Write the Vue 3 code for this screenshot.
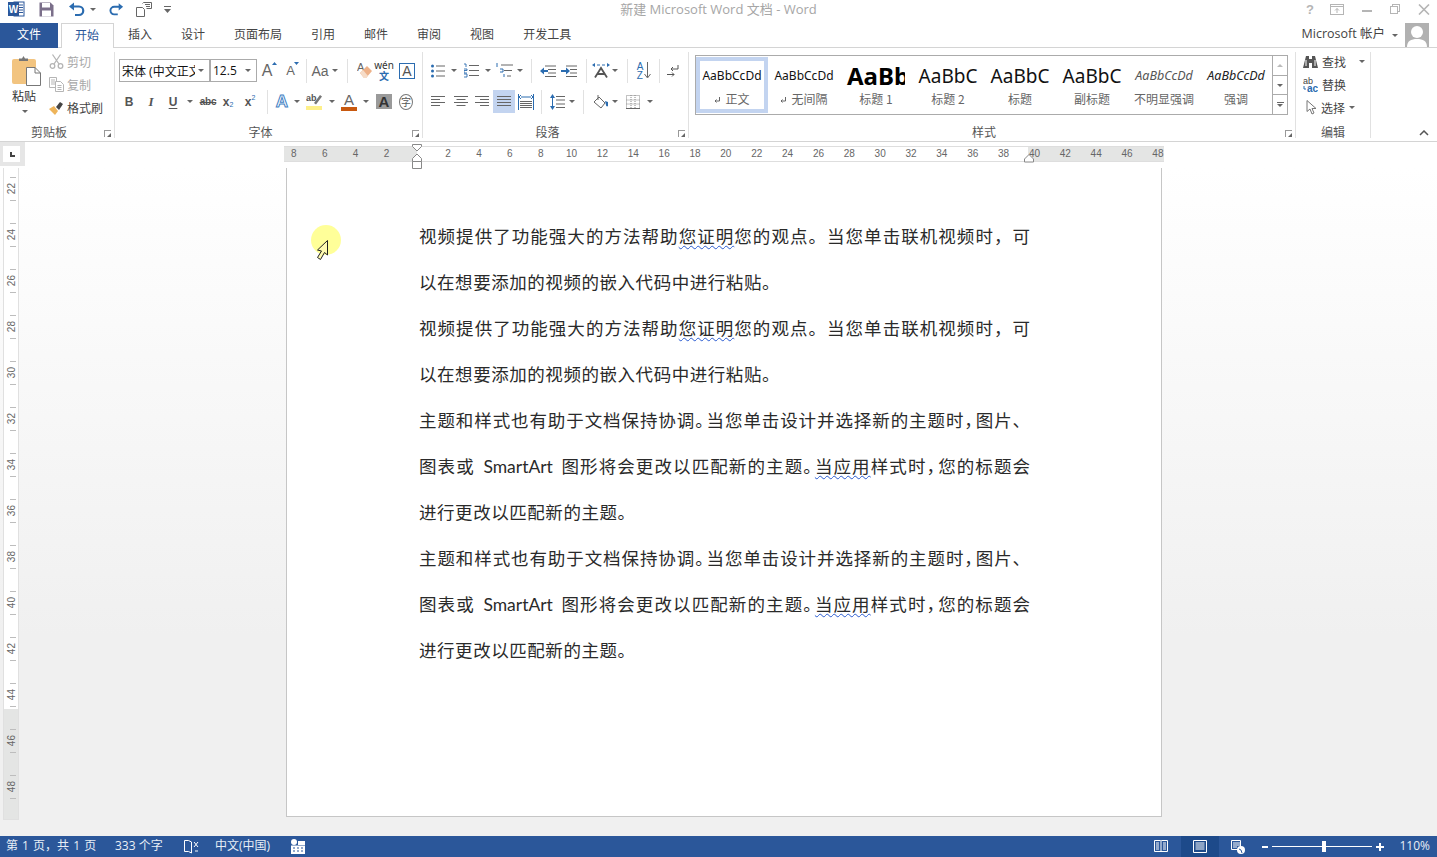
<template>
  <div class="word">
    <!-- title bar -->
    <header class="titlebar">
      <div class="qat">
        <svg class="qi" width="17" height="16" viewBox="0 0 17 16"><rect x="6" y="1" width="10" height="14" fill="#fff" stroke="#2b579a"/><path d="M10 4h5M10 6.500h5M10 9h5M10 11.500h5" stroke="#2b579a"/><rect x="0" y="1" width="11" height="14" fill="#2b579a"/><text x="5.500" y="12" class="logo-w">W</text></svg>
        <svg class="qi save" width="15" height="15" viewBox="0 0 15 15"><path d="M.5.500h11l3 3v11H.5z" fill="#7b6f8a"/><rect x="3" y="1" width="8" height="4.500" fill="#fff"/><rect x="3" y="8.500" width="9" height="6" fill="#fff"/></svg>
        <svg class="qi undo" width="18" height="15" viewBox="0 0 18 15"><path d="M5 4.500h6a4.200 4.200 0 0 1 0 8.500H7" fill="none" stroke="#2b6cb0" stroke-width="2.200"/><path d="M1 4.500 6 .5v8z" fill="#2b6cb0"/></svg>
        <i class="caret qc"></i>
        <svg class="qi redo" width="16" height="15" viewBox="0 0 18 15"><path d="M13 4.500H7a4.200 4.200 0 0 0 0 8.500h4" fill="none" stroke="#2b6cb0" stroke-width="2.200"/><path d="M17 4.500 12 .5v8z" fill="#2b6cb0"/></svg>
        <svg class="qi touch" width="17" height="16" viewBox="0 0 17 16" fill="none" stroke="#666"><path d="M.5 6.500h6l2 2v7h-8z" fill="#fff"/><path d="M6.500 2.500l1-1h8v6h-5"/><path d="M9 3.500h5M10 5.500h4"/></svg>
        <svg class="qi custom" width="7" height="8" viewBox="0 0 7 8"><path d="M0 1.500h7" stroke="#666"/><path d="M0 4h7L3.500 8z" fill="#666"/></svg>
      </div>
      <div class="doc-title">新建 Microsoft Word 文档 - Word</div>
      <div class="winbtns">
        <span class="help">?</span>
        <svg width="14" height="11" viewBox="0 0 14 11" fill="none" stroke="#b5b5b5"><rect x=".5" y=".5" width="13" height="10"/><path d="M.5 2.500h13M7 9V4.500M5 6.500l2-2 2 2"/></svg>
        <svg width="10" height="10" viewBox="0 0 10 10"><path d="M0 7h10" stroke="#b5b5b5" stroke-width="2"/></svg>
        <svg width="10" height="10" viewBox="0 0 10 10" fill="#fff" stroke="#b5b5b5"><rect x="2.500" y=".5" width="7" height="7"/><rect x=".5" y="2.500" width="7" height="7"/></svg>
        <svg width="12" height="11" viewBox="0 0 12 11"><path d="M1 .5l10 10M11 .5l-10 10" stroke="#b5b5b5" stroke-width="1.600"/></svg>
      </div>
    </header>

    <!-- tabs -->
    <nav class="tabs">
      <div class="tab-file">文件</div>
      <div class="tab active">开始</div>
      <div v-for="tab in tabs" :key="tab" class="tab">{{ tab }}</div>
      <div class="account">
        <span class="acc-name">Microsoft 帐户</span>
        <i class="caret"></i>
        <svg class="avatar" width="24" height="24" viewBox="0 0 24 24"><rect width="24" height="24" fill="#b1b1b1"/><circle cx="12" cy="9" r="6" fill="#fff"/><path d="M2 24c0-6 4-8 10-8s10 2 10 8z" fill="#fff"/></svg>
      </div>
    </nav>

    <!-- ribbon -->
    <section class="ribbon">
      <div class="group g-clip">
        <div class="clip-body">
          <div class="paste">
            <svg width="29" height="30" viewBox="0 0 29 30"><rect x="0" y="3" width="24" height="25" rx="2" fill="#f2c480"/><path d="M7 5V2.500h3L11.500 0l1.500 2.500h3V5z" fill="#767676"/><path d="M14.500 11.500h8.500l5.500 5.500v12.500h-14z" fill="#fff" stroke="#777"/><path d="M23 11.500V17h5.500" fill="none" stroke="#777"/></svg>
            <span class="paste-text">粘贴</span>
            <i class="caret"></i>
          </div>
          <div class="clip-col">
            <div class="clip-row off">
              <svg width="15" height="15" viewBox="0 0 15 15" fill="none" stroke="#b5b5b5" stroke-width="1.300"><circle cx="3.500" cy="12" r="2.300"/><circle cx="11.500" cy="12" r="2.300"/><path d="M5 10 11.500.5M10 10 3.500.5"/></svg>
              <span>剪切</span>
            </div>
            <div class="clip-row off">
              <svg width="15" height="15" viewBox="0 0 15 15" fill="#fff" stroke="#b5b5b5"><path d="M.5.500h7v10h-7z"/><path d="M2 3h4M2 5h4M2 7h4"/><path d="M6.500 4.500h5l3 3v7h-8z"/><path d="M8.500 8.500h4M8.500 10.500h4M8.500 12.500h4"/></svg>
              <span>复制</span>
            </div>
            <div class="clip-row">
              <svg width="15" height="14" viewBox="0 0 15 14"><path d="M0 8l5-3 4 5-3 4z" fill="#eeb45a"/><path d="M7 6l4-5 3 2-4 6z" fill="#444"/></svg>
              <span>格式刷</span>
            </div>
          </div>
        </div>
        <div class="g-label">剪贴板</div>
        <i class="launcher"></i>
      </div>

      <div class="group g-font">
        <div class="row row-first">
          <div class="select w91"><span class="sel-text">宋体 (中文正文)</span><i class="caret"></i></div>
          <div class="select w47 no-left"><span class="sel-text">12.5</span><i class="caret"></i></div>
          <div class="t w24"><span class="big-a">A</span><svg class="up-tri" width="5" height="3" viewBox="0 0 5 3"><path d="M0 3 2.500 0 5 3z" fill="#2b6cb0"/></svg></div>
          <div class="t w22"><span class="small-a">A</span><svg class="up-tri" width="5" height="3" viewBox="0 0 5 3"><path d="M0 0h5L2.500 3z" fill="#2b6cb0"/></svg></div>
          <i class="sep w5"></i>
          <div class="t w24"><span class="aa">Aa</span></div>
          <i class="caret"></i>
          <i class="sep w18"></i>
          <div class="t w18">
            <svg width="16" height="17" viewBox="0 0 16 17"><text x="0" y="9" class="eraser-a">A</text><path d="M3 11 10 4l5 5-6 7H7z" fill="#eeb188"/><path d="M3 11l4 5h2l2-2-5-6z" fill="#f6dcc8"/></svg>
          </div>
          <div class="t w20 wen"><span class="wen-top">wén</span><span class="wen-bot">文</span></div>
          <div class="t w26"><span class="a-box">A</span></div>
        </div>
        <div class="row row2">
          <div class="t w22 fmt b">B</div>
          <div class="t w22 fmt it">I</div>
          <div class="t w22 fmt u">U</div>
          <i class="caret c12"></i>
          <div class="t w24 fmt abc">abc</div>
          <div class="t w16 fmt sub">x<small>2</small></div>
          <div class="t w28 fmt sup">x<small>2</small></div>
          <i class="sep w6"></i>
          <div class="t w24"><span class="a-glow">A</span></div>
          <i class="caret"></i>
          <div class="t w29">
            <svg width="17" height="17" viewBox="0 0 17 17"><text x="0" y="8" class="ab-t">ab</text><path d="M8 10l6-8 2 1.500-6 8z" fill="#777"/><rect x="0" y="13" width="16" height="4" fill="#fef08a"/></svg>
          </div>
          <i class="caret"></i>
          <div class="t w28 col-a"><span>A</span><i class="bar"></i></div>
          <i class="caret"></i>
          <div class="t w30"><span class="a-gray">A</span></div>
          <div class="t w14"><span class="zi">字</span></div>
        </div>
        <div class="g-label">字体</div>
        <i class="launcher"></i>
      </div>

      <div class="group g-para">
        <div class="row">
          <div class="t w26"><svg width="14" height="14" viewBox="0 0 14 14"><path d="M5 2h9M5 7h9M5 12h9" stroke="#666"/><circle cx="1.500" cy="2" r="1.500" fill="#2b6cb0"/><circle cx="1.500" cy="7" r="1.500" fill="#2b6cb0"/><circle cx="1.500" cy="12" r="1.500" fill="#2b6cb0"/></svg></div>
          <i class="caret"></i>
          <div class="t w28"><svg width="15" height="15" viewBox="0 0 15 15"><path d="M5 2.500h10M5 7.500h10M5 12.500h10" stroke="#666"/><path d="M0 1h2v3M0 6h3v1.500H0V10h3M0 11h3v3H0" fill="none" stroke="#2b6cb0" stroke-width=".9"/></svg></div>
          <i class="caret"></i>
          <div class="t w26"><svg width="17" height="15" viewBox="0 0 17 15"><path d="M5 2h12M8 7.500h8M11 13h4" stroke="#666"/><path d="M1 0v4M4 6h3v3H4M8 11v3" fill="none" stroke="#2b6cb0"/></svg></div>
          <i class="caret"></i>
          <i class="sep w16"></i>
          <div class="t w18"><svg width="16" height="12" viewBox="0 0 16 12"><path d="M5 1h11M8 4.500h8M8 8h8M5 11.500h11" stroke="#666"/><path d="M0 6l4-3.500V5h4v2H4v2.500z" fill="#2b6cb0"/></svg></div>
          <div class="t w24"><svg width="16" height="12" viewBox="0 0 16 12"><path d="M5 1h11M9 4.500h7M9 8h7M5 11.500h11" stroke="#666"/><path d="M9 6 5 2.500V5H0v2h5v2.500z" fill="#2b6cb0"/></svg></div>
          <i class="sep w10"></i>
          <div class="t w20"><svg width="18" height="15" viewBox="0 0 18 15"><path d="M3 14.500 9 5l6 9.500M5 11h8" fill="none" stroke="#555" stroke-width="1.800"/><path d="M5 2h3M10 2h3" stroke="#2b6cb0"/><path d="M0 2l3-2v4zM18 2l-3-2v4z" fill="#2b6cb0"/></svg></div>
          <i class="caret c8"></i>
          <i class="sep w16"></i>
          <div class="t w18 sort"><span class="az">A<br />Z</span><svg width="7" height="17" viewBox="0 0 7 17"><path d="M3.500 0v15M.5 12l3 4 3-4" fill="none" stroke="#666"/></svg></div>
          <i class="sep w12"></i>
          <div class="t w16"><svg width="12" height="14" viewBox="0 0 12 14" fill="none" stroke="#555"><path d="M11 1v4H4"/><path d="M6 3 4 5l2 2"/><path d="M0 10.500h7M5 8.500l2 2-2 2"/></svg></div>
        </div>
        <div class="row row2">
          <div class="t w26"><svg width="14" height="11" viewBox="0 0 14 11"><path d="M0 .5h14M0 3.500h9M0 6.500h14M0 9.500h9" stroke="#666"/></svg></div>
          <div class="t w20"><svg width="14" height="11" viewBox="0 0 14 11"><path d="M0 .5h14M2.500 3.500h9M0 6.500h14M2.500 9.500h9" stroke="#666"/></svg></div>
          <div class="t w22"><svg width="14" height="11" viewBox="0 0 14 11"><path d="M0 .5h14M5 3.500h9M0 6.500h14M5 9.500h9" stroke="#666"/></svg></div>
          <div class="t w22 on"><svg width="14" height="11" viewBox="0 0 14 11"><path d="M0 .5h14M0 3.500h14M0 6.500h14M0 9.500h14" stroke="#666"/></svg></div>
          <div class="t w22"><svg width="16" height="16" viewBox="0 0 16 16"><path d="M.5 0v16M15.500 0v16" stroke="#2b6cb0"/><path d="M3 3h10M3 1l-2 2 2 2M13 1l2 2-2 2" fill="none" stroke="#2b6cb0"/><path d="M2 7.500h12M2 9.500h12M2 11.500h12M2 13.500h12" stroke="#666"/></svg></div>
          <i class="sep w8"></i>
          <div class="t w24"><svg width="15" height="16" viewBox="0 0 15 16"><path d="M6 2.500h9M6 6h9M6 10h9M6 13.500h9" stroke="#666"/><path d="M2.500 2v12" stroke="#2b6cb0"/><path d="M0 4l2.500-4L5 4zM0 12l2.500 4L5 12z" fill="#2b6cb0"/></svg></div>
          <i class="caret"></i>
          <i class="sep w16"></i>
          <div class="t w20"><svg width="16" height="16" viewBox="0 0 16 16"><path d="M1 8 6 3l6 6-4 5z" fill="#fff" stroke="#666"/><path d="M5 1v5" stroke="#666"/><path d="M12 7l3 1v4c-1 1-2 0-2-1z" fill="#2b6cb0"/></svg></div>
          <i class="caret c8"></i>
          <div class="t w28"><svg width="14" height="14" viewBox="0 0 14 14"><path d="M.5.500h13v13H.5zM.5 5h13M.5 9h13M5 0v14M9 0v14" fill="none" stroke="#888" stroke-dasharray="1 1"/><path d="M0 13.500h14" stroke="#666"/></svg></div>
          <i class="caret"></i>
        </div>
        <div class="g-label">段落</div>
        <i class="launcher"></i>
      </div>

      <div class="group g-styles">
        <div class="gallery">
          <div
              v-for="(item, idx) in styles"
              :key="item.label"
              class="style-item"
              :class="[item.cls, { selected: idx === 0 }]"
          >
            <div class="sample">{{ item.sample }}</div>
            <div class="style-label">
              <svg v-if="item.mark" class="para-mark" width="6" height="7" viewBox="0 0 6 7" fill="none" stroke="#666"><path d="M5.500 0v4H1M2.500 2.500 1 4l1.500 1.500"/></svg>{{ item.label }}
            </div>
          </div>
          <div class="gal-scroll">
            <div class="gal-btn"><i class="tri-up"></i></div>
            <div class="gal-btn"><i class="caret"></i></div>
            <div class="gal-btn more"><i class="more-line"></i><i class="caret"></i></div>
          </div>
        </div>
        <div class="g-label">样式</div>
        <i class="launcher"></i>
      </div>

      <div class="group g-edit">
        <div class="edit-row">
          <svg width="15" height="14" viewBox="0 0 15 14"><path d="M3 1h3v3h3V1h3l3 12H9V8H6v5H0z" fill="#555"/><path d="M3 5v6M12 5v6" stroke="#fff"/></svg>
          <span>查找</span><i class="caret find-caret"></i>
        </div>
        <div class="edit-row">
          <svg width="15" height="16" viewBox="0 0 15 16"><text x="0" y="7" class="rep-top">ab</text><text x="4" y="15" class="rep-bot">ac</text><path d="M1 9v3h2" fill="none" stroke="#2b6cb0"/></svg>
          <span>替换</span>
        </div>
        <div class="edit-row">
          <svg class="sel-arrow" width="11" height="15" viewBox="0 0 11 15"><path d="M1 .5v11l3-2.500 2 5 2-1-2-4.500h4z" fill="#fff" stroke="#777"/></svg>
          <span>选择</span><i class="caret sel-caret"></i>
        </div>
        <div class="g-label">编辑</div>
      </div>

      <svg class="collapse" width="10" height="6" viewBox="0 0 10 6"><path d="M1 5l4-4 4 4" fill="none" stroke="#555" stroke-width="1.500"/></svg>
    </section>

    <!-- horizontal ruler -->
    <div class="ruler-row">
      <div class="corner"><div class="corner-in"><i class="tab-stop"></i></div></div>
      <div class="h-ruler">
        <div class="h-scale">
          <span v-for="(n, idx) in hMarks" :key="idx" class="h-num">{{ n }}</span>
        </div>
        <svg class="indent-left" width="12" height="26" viewBox="0 0 12 26" fill="#fff" stroke="#888"><path d="M1.500.5h9v2L6 7 1.500 2.500z"/><path d="M6 10l4.500 4.500v3h-9v-3z"/><path d="M1.500 17.500h9v7h-9z"/></svg>
        <svg class="indent-right" width="12" height="9" viewBox="0 0 12 9" fill="#fff" stroke="#888"><path d="M6 .5l4.500 4.500v3h-9V5z"/></svg>
      </div>
    </div>

    <!-- document -->
    <main class="doc-area">
      <div class="v-ruler">
        <div v-for="n in vMarks" :key="n" class="v-cell"><span>{{ n }}</span></div>
      </div>
      <div class="page">
        <div class="pointer">
          <svg width="14" height="21" viewBox="0 0 14 21"><path d="M11.500.5v14.500l-3-2.500-4 7-3-2 4-6.500-4-1z" fill="#fffbb0" stroke="#222"/></svg>
        </div>
        <template v-for="(line, idx) in lines" :key="idx">
          <p class="line" :class="{ full: line.full }">
            <template v-for="(seg, i) in line.segs" :key="i">
              <span v-if="seg.err" class="spell">{{ seg.text }}</span>
              <span v-else-if="seg.tight" class="tight">{{ seg.text }}</span>
              <template v-else>{{ seg.text }}</template>
            </template>
          </p>
        </template>
      </div>
    </main>

    <!-- status bar -->
    <footer class="status">
      <span class="st-pages">第 1 页，共 1 页</span>
      <span class="st-words">333 个字</span>
      <svg class="st-proof" width="15" height="15" viewBox="0 0 15 15" fill="none" stroke="#fff"><path d="M.5 1.500h4l3 1.500v11l-3-1.500h-4z"/><path d="M7.500 3v11"/><path d="M10 3l4 5M14 3l-4 5M11 12h3"/></svg>
      <span class="st-lang">中文(中国)</span>
      <svg class="st-macro" width="14" height="15" viewBox="0 0 14 15"><circle cx="3" cy="3" r="3" fill="#fff"/><path d="M0 6.500h14V15H0z" fill="#fff"/><path d="M7 2h7v4H7z" fill="#fff"/><path d="M2 9h2M6 9h2M10 9h2M2 12h2M6 12h2M10 12h2" stroke="#2b579a"/></svg>
      <div class="st-right">
        <svg class="st-read" width="14" height="13" viewBox="0 0 14 13" fill="none" stroke="#fff"><path d="M.5.500h6l.5.500.5-.5h6v11h-13z"/><path d="M7 1v11M2 3h3M2 5h3M2 7h3M2 9h3M9 3h3M9 5h3M9 7h3M9 9h3"/></svg>
        <div class="st-print">
          <svg width="14" height="13" viewBox="0 0 14 13" fill="none" stroke="#fff"><path d="M.5.500h13v12H.5z"/><path d="M2.500 3h9M2.500 5h9M2.500 7h9M2.500 9h9"/></svg>
        </div>
        <svg class="st-web" width="14" height="14" viewBox="0 0 14 14"><path d="M.5.500h9v9H.5z" fill="none" stroke="#fff"/><path d="M2 3h7M2 5h7M2 7h4" stroke="#fff"/><circle cx="10" cy="10" r="4" fill="#fff"/><path d="M8 9l2 1 1 3" stroke="#2b579a" fill="none"/></svg>
        <i class="zoom-minus"></i>
        <div class="zoom-track"><i class="zoom-thumb"></i></div>
        <i class="zoom-plus"></i>
        <span class="st-zoom">110%</span>
      </div>
    </footer>
  </div>
</template>

<script setup>
const tabs = ['插入', '设计', '页面布局', '引用', '邮件', '审阅', '视图', '开发工具']

const styles = [
  { sample: 'AaBbCcDd', label: '正文', cls: 's-normal', mark: true },
  { sample: 'AaBbCcDd', label: '无间隔', cls: 's-normal', mark: true },
  { sample: 'AaBb', label: '标题 1', cls: 's-h1' },
  { sample: 'AaBbC', label: '标题 2', cls: 's-h2' },
  { sample: 'AaBbC', label: '标题', cls: 's-h2' },
  { sample: 'AaBbC', label: '副标题', cls: 's-h2' },
  { sample: 'AaBbCcDd', label: '不明显强调', cls: 's-subtle' },
  { sample: 'AaBbCcDd', label: '强调', cls: 's-em' },
]

// top ruler numbers, blank slot is the zero point at the left margin
const hMarks = [8, 6, 4, 2, '']
for (let n = 2; n <= 48; n += 2) hMarks.push(n)

const vMarks = []
for (let n = 22; n <= 48; n += 2) vMarks.push(n)

const videoLines = [
  {
    full: true,
    segs: [
      { text: '视频提供了功能强大的方法帮助' },
      { text: '您证明', err: true },
      { text: '您的观点。当您单击联机视频时，可' },
    ],
  },
  { segs: [{ text: '以在想要添加的视频的嵌入代码中进行粘贴。' }] },
]

const themeLines = [
  {
    full: true,
    segs: [
      { text: '主题和样式也有助于文档保持协调' },
      { text: '。', tight: true },
      { text: '当您单击设计并选择新的主题时' },
      { text: '，', tight: true },
      { text: '图片、' },
    ],
  },
  {
    full: true,
    segs: [
      { text: '图表或 SmartArt 图形将会更改以匹配新的主题' },
      { text: '。', tight: true },
      { text: '当应用', err: true },
      { text: '样式时' },
      { text: '，', tight: true },
      { text: '您的标题会' },
    ],
  },
  { segs: [{ text: '进行更改以匹配新的主题。' }] },
]

const lines = [...videoLines, ...videoLines, ...themeLines, ...themeLines]
</script>

<style>
html, body {
  margin: 0;
  background: #fff;
}
</style>

<style scoped>
.word {
  width: 1437px;
  height: 857px;
  display: flex;
  flex-direction: column;
  overflow: hidden;
  font-family: "Open Sans", "Noto Sans CJK SC", sans-serif;
  font-size: 12px;
  color: #444;
  background: #fff;
}
i { display: block; font-style: normal; }

.caret {
  width: 0;
  height: 0;
  flex: none;
  border-left: 3px solid transparent;
  border-right: 3px solid transparent;
  border-top: 3px solid #666;
}
.caret.c8 { margin: 0 1px; }
.caret.c12 { margin: 0 3px; }

/* ─── TITLE BAR ─────────────────────────────── */
.titlebar {
  height: 23px;
  flex: none;
  display: flex;
  align-items: flex-start;
  position: relative;
}
.qat {
  display: flex;
  align-items: center;
  height: 18px;
  padding-left: 8px;
}
.logo-w {
  font: bold 10px "Liberation Sans", sans-serif;
  fill: #fff;
  text-anchor: middle;
}
.save { margin-left: 14px; }
.undo { margin-left: 14px; }
.qc { margin-left: 4px; }
.redo { margin-left: 12px; }
.touch { margin-left: 12px; }
.custom { margin-left: 11px; }
.doc-title {
  position: absolute;
  left: 0;
  right: 0;
  top: 1px;
  text-align: center;
  font-size: 13px;
  line-height: 17px;
  color: #a6a6a6;
}
.winbtns {
  margin-left: auto;
  display: flex;
  align-items: center;
  gap: 18px;
  height: 18px;
  padding-right: 7px;
}
.help {
  font: bold 13px "Liberation Sans", sans-serif;
  color: #b5b5b5;
  margin-right: -2px;
}

/* ─── TABS ──────────────────────────────────── */
.tabs {
  height: 25px;
  flex: none;
  display: flex;
  border-bottom: 1px solid #d4d4d4;
  box-sizing: border-box;
  position: relative;
  line-height: 21px;
  font-family: "Noto Sans CJK SC", sans-serif;
}
.tab-file {
  width: 58px;
  height: 25px;
  margin-right: 2.500px;
  text-align: center;
  background: #2b579a;
  color: #fff;
}
.tab {
  padding: 0 14.500px;
  color: #444;
}
.tab.active {
  box-sizing: border-box;
  height: 25px;
  padding: 0 13.500px;
  color: #2b579a;
  background: #fff;
  border: 1px solid #d4d4d4;
  border-bottom: none;
}
.account {
  margin-left: auto;
  display: flex;
  align-items: center;
  height: 24px;
  padding-right: 8px;
  font-size: 12.500px;
  color: #444;
}
.acc-name {
  font-family: "Open Sans", "Noto Sans CJK SC", sans-serif;
  padding-bottom: 3px;
}
.account .caret { margin: 0 7px; }

/* ─── RIBBON ────────────────────────────────── */
.ribbon {
  height: 94px;
  flex: none;
  box-sizing: border-box;
  display: flex;
  align-items: flex-start;
  border-bottom: 1px solid #d4d4d4;
  position: relative;
  font-family: "Noto Sans CJK SC", sans-serif;
}
.group {
  position: relative;
  box-sizing: border-box;
  height: 86px;
  margin-top: 4px;
  border-right: 1px solid #e1e1e1;
  display: flex;
  flex-direction: column;
}
.g-clip { width: 115px; }
.g-font { width: 308px; padding: 7px 0 0 3px; }
.g-para { width: 266px; padding: 7px 0 0 2px; }
.g-styles { width: 607px; padding: 3px 0 0 6px; }
.g-edit { width: 75px; padding-left: 7px; }
.row-first { margin-left: 1px; }
.g-label {
  position: absolute;
  left: 0;
  right: 16px;
  bottom: 0;
  height: 13px;
  line-height: 13px;
  font-size: 12px;
  text-align: center;
  color: #555;
}
.g-edit .g-label { right: 0; }
.launcher {
  position: absolute;
  right: 3px;
  bottom: 1px;
  width: 6px;
  height: 6px;
  border: 1px solid #999;
  border-width: 1px 0 0 1px;
}
.launcher::after {
  content: "";
  position: absolute;
  right: 0;
  bottom: 0;
  width: 0;
  height: 0;
  border-left: 4px solid transparent;
  border-bottom: 4px solid #666;
}

.row {
  display: flex;
  align-items: center;
  height: 23px;
}
.row2 { margin-top: 8px; }
.t {
  flex: none;
  height: 23px;
  display: flex;
  align-items: center;
  justify-content: center;
  position: relative;
}
.on { background: #c3d4f0; }
.sep {
  flex: none;
  height: 24px;
  position: relative;
}
.sep::after {
  content: "";
  position: absolute;
  left: 50%;
  top: 0;
  bottom: 0;
  width: 1px;
  background: #e1e1e1;
}
.w5 { width: 5px; }
.w6 { width: 6px; }
.w8 { width: 8px; }
.w10 { width: 10px; }
.w12 { width: 12px; }
.w14 { width: 14px; }
.w16 { width: 16px; }
.w18 { width: 18px; }
.w20 { width: 20px; }
.w22 { width: 22px; }
.w24 { width: 24px; }
.w26 { width: 26px; }
.w28 { width: 28px; }
.w29 { width: 29px; }
.w30 { width: 30px; }
.w47 { width: 47px; }
.w91 { width: 91px; }

/* clipboard */
.clip-body { display: flex; }
.paste {
  width: 49px;
  padding-left: 12px;
  padding-top: 4px;
  box-sizing: border-box;
  display: flex;
  flex-direction: column;
}
.paste-text {
  line-height: 14px;
  margin-top: 3px;
  font-size: 12px;
  color: #333;
}
.paste .caret { margin: 7px 0 0 10px; }
.clip-row {
  display: flex;
  align-items: center;
  gap: 3px;
  height: 23px;
  color: #444;
}
.clip-col .clip-row:first-child { margin-top: -2px; }
.clip-row.off { color: #a8a8a8; }

/* font */
.select {
  box-sizing: border-box;
  flex: none;
  height: 23px;
  display: flex;
  align-items: center;
  border: 1px solid #ababab;
  background: #fff;
  padding: 0 5px 0 2px;
}
.sel-text {
  font-family: "Open Sans", "Noto Sans CJK SC", sans-serif;
  color: #111;
  font-size: 12px;
  white-space: nowrap;
  overflow: hidden;
  flex: 1;
  min-width: 0;
  margin-right: 3px;
}
.big-a, .small-a, .aa, .a-gray, .a-box, .a-glow, .col-a span {
  font-family: "Liberation Sans", sans-serif;
  color: #666;
}
.big-a { font-size: 16px; margin-left: -4px; }
.small-a { font-size: 13px; margin-left: -3px; }
.up-tri { position: absolute; right: 4px; top: 3px; }
.aa { font-size: 14px; }
.eraser-a { font: 11px "Liberation Sans", sans-serif; fill: #666; }
.wen { flex-direction: column; }
.wen-top { font: 10px/10px "Noto Sans", sans-serif; color: #333; }
.wen-bot { font-size: 10px; line-height: 11px; color: #2b6cb0; font-weight: 700; }
.a-box {
  box-sizing: border-box;
  width: 16px;
  height: 16px;
  border: 1px solid #2b6cb0;
  font-size: 14px;
  line-height: 14px;
  text-align: center;
  color: #555;
}
.fmt {
  font-family: "Liberation Sans", sans-serif;
  font-weight: 700;
  font-size: 12px;
  color: #555;
}
.it { font-family: "Liberation Serif", serif; font-style: italic; font-size: 13px; }
.u { text-decoration: underline; text-underline-offset: 2px; }
.abc {
  font-size: 10px;
  font-weight: 700;
  text-decoration: line-through;
  letter-spacing: -.2px;
}
.sub small, .sup small { font-size: 7px; color: #2b6cb0; font-weight: 400; }
.sub small { position: relative; top: 3px; }
.sup small { position: relative; top: -4px; }
.a-glow {
  font-size: 17px;
  color: #fff;
  -webkit-text-stroke: 1px #3f7fc4;
  font-weight: 700;
}
.ab-t { font: bold 9px "Liberation Sans", sans-serif; fill: #555; }
.col-a { flex-direction: column; }
.col-a span { font-size: 15px; line-height: 15px; }
.col-a .bar { width: 16px; height: 4px; background: #c8590f; }
.a-gray {
  width: 16px;
  height: 15px;
  background: #9a9a9a;
  color: #333;
  font-size: 15px;
  font-weight: 700;
  line-height: 15px;
  text-align: center;
}
.zi {
  box-sizing: border-box;
  width: 16px;
  height: 16px;
  border: 1px solid #777;
  border-radius: 50%;
  font-size: 10px;
  line-height: 14px;
  text-align: center;
  color: #555;
}
.sort { gap: 1px; }
.az {
  font: 10px/9px "Liberation Sans", sans-serif;
  color: #2b6cb0;
}

/* styles gallery */
.gallery {
  box-sizing: border-box;
  width: 593px;
  height: 60px;
  border: 1px solid #ababab;
  display: flex;
}
.style-item {
  box-sizing: border-box;
  width: 72px;
  height: 56px;
  flex: none;
  margin-top: 1px;
  overflow: hidden;
  text-align: center;
  border: 4px solid transparent;
  color: #111;
}
.style-item.selected { border-color: #c3d4f0; }
.sample {
  height: 23px;
  line-height: 22px;
  margin-top: 4px;
  white-space: nowrap;
  font-family: "Noto Sans", sans-serif;
  font-size: 12px;
  color: #111;
}
.style-label {
  height: 16px;
  line-height: 16px;
  margin-top: 3px;
  font-size: 12px;
  color: #666;
  white-space: nowrap;
}
.para-mark { margin-right: 5px; }
.s-h1 .sample {
  font: 700 24px/22px "Noto Sans", sans-serif;
  color: #000;
  text-align: left;
  padding-left: 3px;
  width: 58px;
  overflow: hidden;
}
.s-h2 .sample { font-size: 19px; color: #111; }
.s-subtle .sample { font-size: 12.500px; font-style: italic; color: #555; }
.s-em .sample { font-size: 12.500px; font-style: italic; color: #222; }
.gal-scroll {
  width: 15px;
  margin-left: auto;
  border-left: 1px solid #ababab;
  display: flex;
  flex-direction: column;
}
.gal-btn {
  flex: 1;
  display: flex;
  flex-direction: column;
  align-items: center;
  justify-content: center;
  gap: 1px;
  border-bottom: 1px solid #ababab;
}
.gal-btn:last-child { border-bottom: none; }
.tri-up {
  width: 0;
  height: 0;
  border-left: 3px solid transparent;
  border-right: 3px solid transparent;
  border-bottom: 3px solid #bbb;
}
.more-line { width: 7px; height: 1px; background: #666; }

/* editing */
.edit-row {
  display: flex;
  align-items: center;
  height: 23px;
  gap: 4px;
  color: #444;
}
.g-edit .edit-row:first-child { margin-top: -2px; }
.find-caret { margin-left: 9px; }
.sel-arrow { margin: 0 0 0 3px; }
.rep-top { font: 9px "Liberation Sans", sans-serif; fill: #444; }
.rep-bot { font: bold 10px "Liberation Sans", sans-serif; fill: #2b6cb0; }
.collapse {
  position: absolute;
  right: 8px;
  bottom: 5px;
}

/* ─── RULERS ────────────────────────────────── */
.ruler-row {
  height: 26px;
  flex: none;
  display: flex;
  align-items: flex-start;
}
.corner {
  width: 25px;
  height: 24px;
  flex: none;
  background: #e6e6e6;
  padding: 4px 5px 4px 3px;
  box-sizing: border-box;
}
.corner-in {
  width: 17px;
  height: 16px;
  background: #fff;
  position: relative;
}
.tab-stop {
  position: absolute;
  left: 7px;
  top: 6px;
  width: 5px;
  height: 5px;
  border-left: 2px solid #444;
  border-bottom: 2px solid #444;
  box-sizing: border-box;
}
.h-ruler {
  position: relative;
  width: 880px;
  height: 16px;
  margin: 4px 0 0 259px;
  box-sizing: border-box;
  border-top: 1px solid #dedede;
  border-bottom: 1px solid #dedede;
  background: linear-gradient(to right, #e4e5e4 133px, #fff 133px, #fff 744px, #e4e5e4 744px);
}
.h-scale {
  display: flex;
  margin-left: -5.600px;
  font: 10px/14px "Liberation Sans", sans-serif;
  color: #666;
}
.h-num {
  width: 30.870px;
  flex: none;
  text-align: center;
}
.indent-left {
  position: absolute;
  left: 127px;
  top: -3px;
  z-index: 1;
}
.indent-right {
  position: absolute;
  left: 739px;
  top: 7px;
}

.doc-area {
  flex: 1;
  min-height: 0;
  display: flex;
  align-items: flex-start;
  background: linear-gradient(to bottom, #fff 0, #f0f0f0 70%);
}
.v-ruler {
  box-sizing: border-box;
  width: 16px;
  height: 652px;
  margin-left: 3px;
  flex: none;
  overflow: hidden;
  border-left: 1px solid #e0e0e0;
  border-right: 1px solid #e0e0e0;
  border-bottom: 1px solid #e0e0e0;
  background: linear-gradient(to bottom, #fff 541px, #e4e5e4 541px);
}
.v-cell {
  height: 46px;
  position: relative;
  display: flex;
  align-items: center;
  justify-content: center;
  font: 10px "Liberation Sans", sans-serif;
  color: #666;
}
.v-cell:first-child { margin-top: -2px; }
.v-cell span {
  writing-mode: vertical-rl;
  transform: rotate(180deg);
}
.v-cell::before,
.v-cell::after {
  content: "";
  position: absolute;
  left: 6px;
  width: 6px;
  height: 1px;
  background: #bdbdbd;
}
.v-cell::before { top: 11px; }
.v-cell::after { top: 34px; }

.page {
  position: relative;
  box-sizing: border-box;
  width: 876px;
  height: 649px;
  margin-left: 267px;
  flex: none;
  padding: 46px 0 0 132px;
  background: #fff;
  border: 1px solid #c6c6c6;
  border-top: none;
}
.pointer {
  position: absolute;
  left: 24px;
  top: 57px;
  width: 30px;
  height: 30px;
  border-radius: 50%;
  background: #ffff99;
}
.pointer svg {
  position: absolute;
  left: 5px;
  top: 15px;
}
.line {
  margin: 0;
  width: 611px;
  height: 46px;
  line-height: 46px;
  font-family: "Lato", "Noto Sans CJK SC", sans-serif;
  font-size: 17.500px;
  letter-spacing: .55px;
  word-spacing: 3px;
  color: #2a2a2a;
  white-space: nowrap;
}
.line.full {
  white-space: normal;
  letter-spacing: 0;
  text-align: justify;
  text-align-last: justify;
}
.spell {
  text-decoration: underline wavy #2a5bd0 1px;
  text-underline-offset: 2px;
}
.tight { letter-spacing: -7px; }

/* ─── STATUS BAR ────────────────────────────── */
.status {
  height: 21px;
  flex: none;
  display: flex;
  align-items: center;
  background: #2b579a;
  color: #e8eef6;
  font-size: 12px;
  line-height: 19px;
}
.status span { padding-bottom: 2px; }
.st-pages { margin-left: 6px; width: 109px; word-spacing: 1px; }
.st-words { width: 69px; }
.st-proof { width: 15px; }
.st-lang { margin-left: 16px; width: 76px; }
.st-right {
  margin-left: auto;
  display: flex;
  align-items: center;
  height: 21px;
}
.st-print {
  width: 38px;
  height: 21px;
  margin: 0 12px 0 13px;
  background: #1d4a8a;
  display: flex;
  align-items: center;
  justify-content: center;
}
.zoom-minus {
  width: 6px;
  height: 2px;
  background: #fff;
  margin: 0 4px 0 17px;
}
.zoom-track {
  position: relative;
  width: 100px;
  height: 1px;
  background: #fff;
}
.zoom-thumb {
  position: absolute;
  left: 50px;
  top: -5px;
  width: 4px;
  height: 11px;
  background: #fff;
}
.zoom-plus {
  position: relative;
  width: 8px;
  height: 2px;
  margin-left: 4px;
  background: #fff;
}
.zoom-plus::after {
  content: "";
  position: absolute;
  left: 3px;
  top: -3px;
  width: 2px;
  height: 8px;
  background: #fff;
}
.st-zoom { margin: 0 7px 0 15px; }
</style>
